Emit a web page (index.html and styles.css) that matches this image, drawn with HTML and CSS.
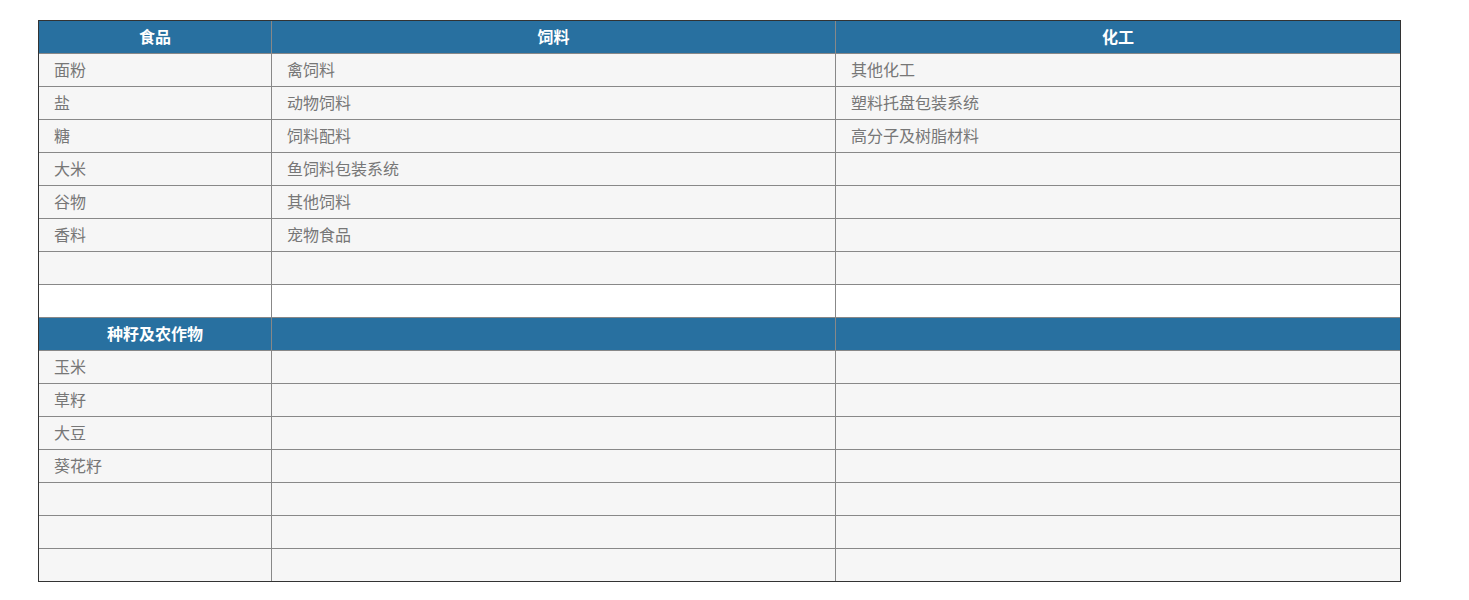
FILE: index.html
```html
<!DOCTYPE html>
<html lang="zh-CN">
<head>
<meta charset="utf-8">
<title>应用行业</title>
<link rel="stylesheet" href="styles.css">
</head>
<body>
<div class="page">
  <table class="grid">
    <colgroup>
      <col class="c1">
      <col class="c2">
      <col class="c3">
    </colgroup>
    <tbody>
      <tr class="head"><th>食品</th><th>饲料</th><th>化工</th></tr>
      <tr><td>面粉</td><td>禽饲料</td><td>其他化工</td></tr>
      <tr><td>盐</td><td>动物饲料</td><td>塑料托盘包装系统</td></tr>
      <tr><td>糖</td><td>饲料配料</td><td>高分子及树脂材料</td></tr>
      <tr><td>大米</td><td>鱼饲料包装系统</td><td></td></tr>
      <tr><td>谷物</td><td>其他饲料</td><td></td></tr>
      <tr><td>香料</td><td>宠物食品</td><td></td></tr>
      <tr><td></td><td></td><td></td></tr>
      <tr class="blank"><td></td><td></td><td></td></tr>
      <tr class="head"><th>种籽及农作物</th><th></th><th></th></tr>
      <tr><td>玉米</td><td></td><td></td></tr>
      <tr><td>草籽</td><td></td><td></td></tr>
      <tr><td>大豆</td><td></td><td></td></tr>
      <tr><td>葵花籽</td><td></td><td></td></tr>
      <tr><td></td><td></td><td></td></tr>
      <tr><td></td><td></td><td></td></tr>
      <tr class="last"><td></td><td></td><td></td></tr>
    </tbody>
  </table>
</div>
</body>
</html>
```
FILE: styles.css
```css
html, body {
  margin: 0;
  padding: 0;
  background: #ffffff;
}

.page {
  padding: 20px 0 0 38px;
}

.grid {
  width: 1363px;
  table-layout: fixed;
  border-collapse: separate;
  border-spacing: 0;
  border: 1px solid #333333;
  font-family: "Noto Sans CJK SC", "Microsoft YaHei", sans-serif;
  font-size: 16px;
}

.c1 { width: 233px; }
.c2 { width: 564px; }
.c3 { width: 564px; }

.grid th,
.grid td {
  box-sizing: border-box;
  height: 33px;
  padding: 0 0 1px 15px;
  border-right: 1px solid #888888;
  border-bottom: 1px solid #888888;
  line-height: 31px;
  white-space: nowrap;
  overflow: hidden;
}

.grid td {
  background: #f6f6f6;
  color: #777777;
  text-align: left;
}

.grid th {
  background: #2870a0;
  color: #ffffff;
  font-weight: 700;
  text-align: center;
  padding: 0 0 1px 0;
}

.grid tr > :last-child {
  border-right: none;
}

.grid .blank td {
  background: #ffffff;
}

.grid .last td {
  border-bottom: none;
  height: 32px;
}
```
